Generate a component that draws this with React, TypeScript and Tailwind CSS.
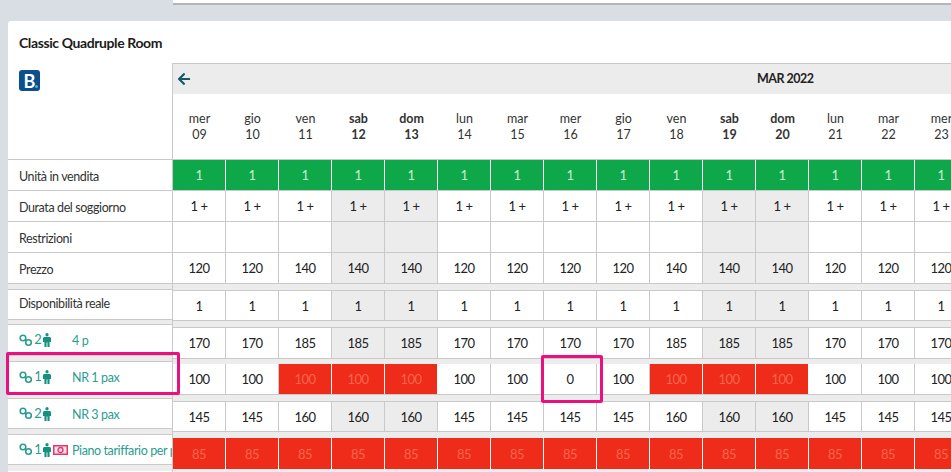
import React from 'react';
import { FaArrowLeft } from 'react-icons/fa';

const days = [
  ['mer', '09'], ['gio', '10'], ['ven', '11'], ['sab', '12'], ['dom', '13'],
  ['lun', '14'], ['mar', '15'], ['mer', '16'], ['gio', '17'], ['ven', '18'],
  ['sab', '19'], ['dom', '20'], ['lun', '21'], ['mar', '22'], ['mer', '23'],
];
const weekend = [3, 4, 10, 11];

const pattern = (a: string, b: string) => [a, a, b, b, b, a, a, a, a, b, b, b, a, a, a];

const LinkIcon = () => (
  <svg width="15" height="13" viewBox="0 0 15 13" fill="none" stroke="#2a9d8f" strokeWidth="1.6" className="shrink-0">
    <circle cx="4" cy="4" r="2.8" />
    <circle cx="9.500" cy="8.500" r="2.8" />
    <path d="M6 5.500l1.500 1.500" />
  </svg>
);

const PersonIcon = () => (
  <svg width="8" height="14" viewBox="0 0 9 14" preserveAspectRatio="none" fill="#16907f" className="shrink-0 ml-[1px]">
    <circle cx="4.5" cy="1.8" r="1.8" />
    <path d="M1.6 4h5.8c.8 0 1.6.7 1.6 1.5V9H7.4v5H5v-4.5H4V14H1.6V9H0V5.5C0 4.700.8 4 1.600 4z" />
  </svg>
);

const MoneyIcon = () => (
  <svg width="15" height="10" viewBox="0 0 15 10" fill="none" className="shrink-0">
    <rect x="0.75" y="0.75" width="13.5" height="8.5" stroke="#e8336d" strokeWidth="1.5" fill="#fbe3ea" />
    <circle cx="7.5" cy="5" r="2.5" stroke="#e8336d" strokeWidth="1.3" />
  </svg>
);

const Label = ({ text, className }: { text: string; className: string }) => (
  <div className={`flex items-center pl-[11px] text-[12.5px] tracking-[-0.4px] text-[#333] border-b border-[#c9c9c9] ${className}`}>{text}</div>
);

const Plan = ({ n, name, money, className }: { n: number; name: string; money?: boolean; className: string }) => (
  <div className={`flex items-center pl-[11px] text-[#2a9d8f] border-y border-[#c9c9c9] overflow-hidden whitespace-nowrap ${className}`}>
    <div className="w-[53px] shrink-0 flex items-center">
      <LinkIcon />
      <span className="w-[8px] text-center text-[13px]">{n}</span>
      <PersonIcon />
      {money && <span className="ml-[2px]"><MoneyIcon /></span>}
    </div>
    <span className="pt-[3px] text-[12.5px] tracking-[-0.4px]">{name}</span>
  </div>
);

const Row = ({ values, height, kind, shade = true }: { values: string[]; height: string; kind?: (i: number) => string; shade?: boolean }) => (
  <div className={`flex shrink-0 ${height}`}>
    {values.map((v, i) => {
      const k = kind ? kind(i) : '';
      let cls = 'bg-white text-[#222] border-[#c9c9c9]';
      if (shade && weekend.includes(i)) cls = 'bg-[#ececec] text-[#222] border-[#c9c9c9]';
      if (k === 'green') cls = 'bg-[#0ea84a] text-[#c9f0d6] border-white';
      if (k === 'red') cls = 'bg-[#ee2c19] text-[#f7654f] border-white';
      return (
        <div key={i} className={`w-[53px] shrink-0 flex items-center justify-center border-r pt-[2px] text-[13px] tracking-[-0.5px] ${cls}`}>
          {v}
        </div>
      );
    })}
  </div>
);

const Band = ({ className }: { className: string }) => <div className={`bg-[#ececec] shrink-0 ${className}`} />;

export default function App() {
  return (
    <div className="relative w-[951px] h-[472px] overflow-hidden bg-[#d9dde4] font-['Lato',sans-serif]">
      {/* striscia superiore */}
      <div className="ml-[173px] h-[5px] bg-white border-b-2 border-[#b5b5b5]" />

      <div className="ml-[8px] mt-[16px] h-[451px] bg-white rounded-tl-[3px] flex flex-col">
        <div className="h-[42px] shrink-0 pl-[11px] pt-[12px] text-[14px] tracking-[-0.4px] leading-[20px] font-bold text-[#1b1b1b]">
          Classic Quadruple Room
        </div>

        <div className="flex">
          {/* colonna etichette */}
          <div className="w-[164px] shrink-0 flex flex-col">
            <div className="h-[97px] shrink-0 pl-[11px] pt-[7px] border-b border-[#c9c9c9]">
              <div className="relative w-[21px] h-[21px] rounded-[3px] bg-[#0d4f8c] flex items-center justify-center text-white font-bold text-[18px] leading-none">
                B
                <span className="absolute right-[2px] bottom-[3px] w-[3px] h-[3px] rounded-full bg-[#37b6f0]" />
              </div>
            </div>
            <Label text="Unità in vendita" className="h-[31px] shrink-0 pt-[5px]" />
            <Label text="Durata del soggiorno" className="h-[31px] shrink-0 pt-[5px]" />
            <Label text="Restrizioni" className="h-[31px] shrink-0 pt-[5px]" />
            <Label text="Prezzo" className="h-[31px] shrink-0 pt-[5px]" />
            <Band className="h-[5px]" />
            <Label text="Disponibilità reale" className="h-[31px] shrink-0 border-t" />
            <Band className="h-[4px]" />
            <Plan n={2} name="4 p" className="h-[32px] shrink-0" />
            <Band className="h-[5px]" />
            <Plan n={1} name="NR 1 pax" className="h-[32px] shrink-0" />
            <Band className="h-[5px]" />
            <Plan n={2} name="NR 3 pax" className="h-[31px] shrink-0" />
            <Band className="h-[5px]" />
            <Plan n={1} name="Piano tariffario per persona" money className="h-[31px] shrink-0" />
            <Band className="h-[6px]" />
          </div>

          {/* griglia calendario */}
          <div className="flex-1 min-w-0 overflow-hidden flex flex-col border-l border-[#c9c9c9]">
            <div className="h-[31px] shrink-0 w-[795px] relative flex items-center pl-[4px] bg-[#ececec] border-t border-[#c9c9c9]">
              <FaArrowLeft className="text-[#17566b]" size={14} />
              <span className="absolute left-[584px] text-[12.5px] tracking-[-0.5px] font-bold text-[#222]">MAR 2022</span>
            </div>
            <div className="flex h-[66px] shrink-0 border-b border-[#c9c9c9] w-[795px]">
              {days.map(([d, n], i) => (
                <div
                  key={i}
                  className={`w-[53px] shrink-0 flex flex-col items-center justify-center pt-[1px] text-[12.5px] leading-[16px] text-[#333] ${
                    weekend.includes(i) ? 'font-bold text-[#111]' : ''
                  }`}
                >
                  <span>{d}</span>
                  <span>{n}</span>
                </div>
              ))}
            </div>
            <Row values={Array(15).fill('1')} height="h-[31px] border-b border-[#c9c9c9]" kind={() => 'green'} />
            <Row values={Array(15).fill('1 +')} height="h-[31px] border-b border-[#c9c9c9]" />
            <Row values={Array(15).fill('')} height="h-[31px] border-b border-[#c9c9c9]" />
            <Row values={pattern('120', '140')} height="h-[31px] border-b border-[#c9c9c9]" />
            <Band className="h-[6px]" />
            <Row values={Array(15).fill('1')} height="h-[31px] border-y border-[#c9c9c9]" />
            <Band className="h-[6px]" />
            <Row values={pattern('170', '185')} height="h-[32px] border-y border-[#c9c9c9]" />
            <Band className="h-[5px]" />
            <Row
              values={Array(15).fill('100').map((v, i) => (i === 7 ? '0' : v))}
              height="h-[31px] border-b border-[#c9c9c9]"
              shade={false}
              kind={(i) => ([2, 3, 4, 9, 10, 11].includes(i) ? 'red' : '')}
            />
            <Band className="h-[6px]" />
            <Row values={pattern('145', '160')} height="h-[31px] border-y border-[#c9c9c9]" />
            <Band className="h-[6px]" />
            <Row values={Array(15).fill('85')} height="h-[31px]" kind={() => 'red'} />
            <Band className="h-[3px]" />
          </div>
        </div>
      </div>

      {/* riquadri di evidenziazione */}
      <div className="absolute left-[6px] top-[352px] w-[174px] h-[43px] border-[3px] border-[#ec0f80] rounded-[2px]" />
      <div className="absolute left-[541px] top-[355px] w-[62px] h-[48px] border-[3px] border-[#ec0f80] rounded-[2px]" />
    </div>
  );
}
